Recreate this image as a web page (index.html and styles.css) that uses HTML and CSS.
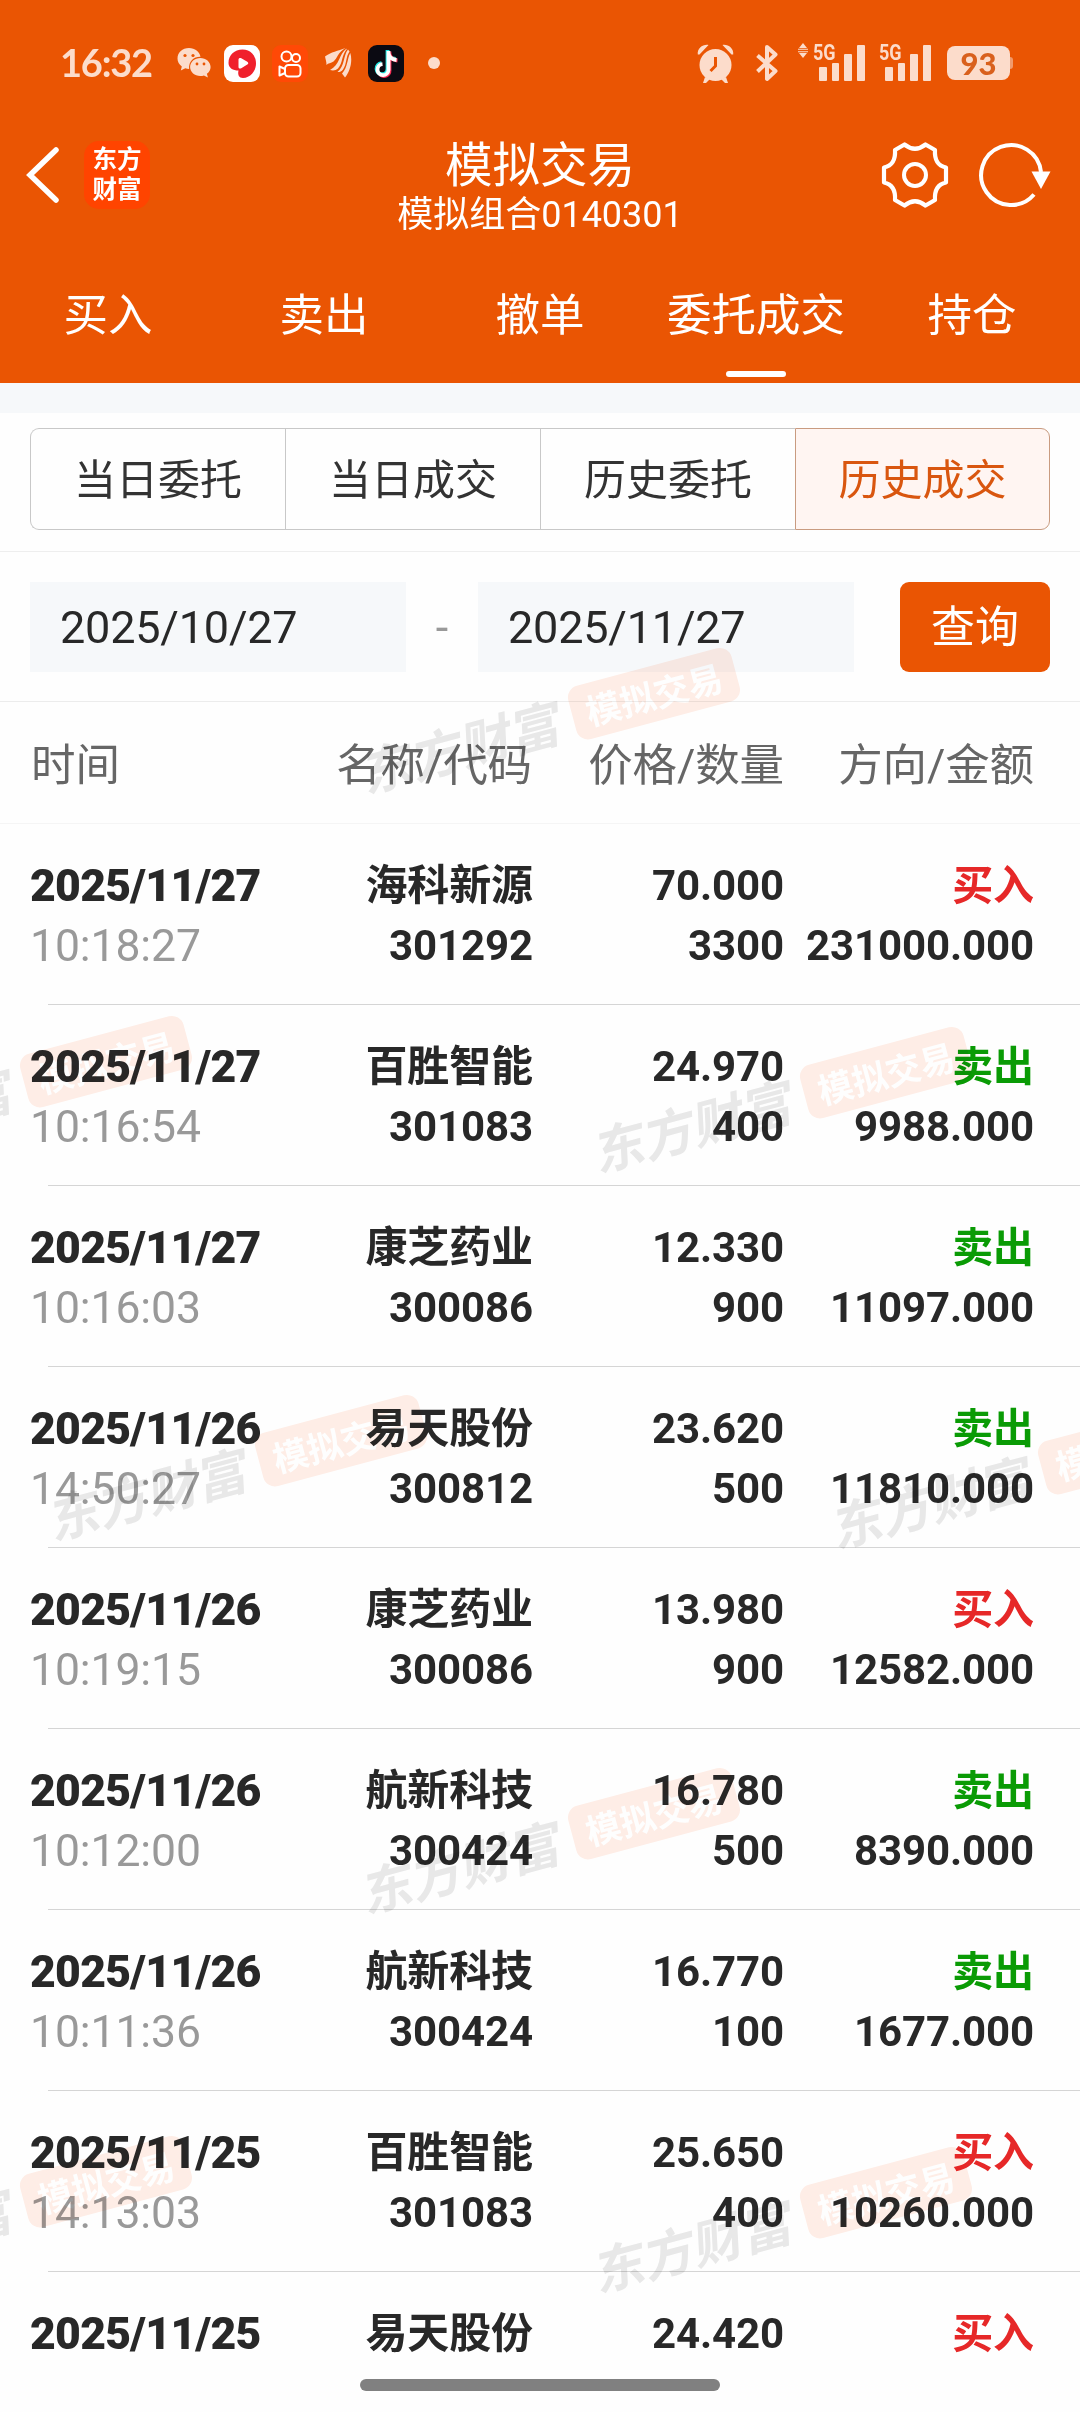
FILE: index.html
```html
<!DOCTYPE html>
<html lang="zh-CN">

<head>
    <meta charset="UTF-8">
    <meta name="viewport" content="width=device-width, initial-scale=1.0">
    <title>模拟交易</title>
    <link rel="stylesheet" href="styles.css">
</head>

<body>

    <div class="page">
        <header class="top">
            <div class="status">
                <span class="clock">16:32</span>
                <svg class="wechat" width="34" height="32" viewBox="0 0 34 32">
                    <path d="M12 1C5.400 1 .5 5.600.5 11.500c0 3.300 1.600 6 4.300 8L3.800 23.500l4.500-2.200c1.300.4 2.500.6 3.800.6C11.500 14 17 9.500 23.500 9.700 22.500 4.500 18 1 12 1z" />
                    <path d="M23.300 11c-5.600 0-10.200 3.900-10.200 9s4.600 9 10.200 9c1.300 0 2.500-.2 3.600-.6l4 2-1-3.600c2.300-1.700 3.700-4 3.700-6.800 0-5.100-4.700-9-10.300-9z" />
                    <g class="hole"><circle cx="8" cy="8.500" r="1.600" /><circle cx="16" cy="8.500" r="1.600" /><circle cx="20" cy="17" r="1.400" /><circle cx="27" cy="17" r="1.400" /></g>
                </svg>
                <svg class="video" width="36" height="37" viewBox="0 0 36 37">
                    <rect width="36" height="37" rx="9" fill="#fff" />
                    <path d="M4.500 18C4.500 10 10.500 4.500 18.500 4.500S32 10.500 32 18.500 26 33 19 33c-4 0-5.500-3-4.500-7.500C9 25.500 4.500 23 4.500 18z" fill="#f0202c" />
                    <path d="M14.500 14.500c0-1.500 1.500-2 2.800-1.300l6 3.600c1.300.8 1.300 2 0 2.800l-6 3.600c-1.300.7-2.800.2-2.800-1.300z" fill="#fff" />
                </svg>
                <svg class="kuaishou" width="36" height="37" viewBox="0 0 36 37">
                    <rect width="36" height="37" rx="9" fill="#ff4906" />
                    <g fill="none" stroke="#fff" stroke-width="2"><circle cx="14.500" cy="11.500" r="5" /><circle cx="24" cy="13" r="4" /><rect x="13" y="20" width="15.500" height="11.500" rx="3.500" /><path d="M13 24l-5.500-2.500v9L13 28" stroke-linejoin="round" /></g>
                </svg>
                <svg class="feather" width="27" height="30" viewBox="0 0 27 30">
                    <path d="M0 8.500C6 4 13 3 20.500 0 13 4 12 11 8.500 13.500 6 15.300 3 15 1.500 17 1.500 13.500.5 11 0 8.500z" />
                    <path d="M21 1C14 6 15 17 5 22c3 1 6 .5 8-1.500C18 15 16.500 7 22 .8z" />
                    <path d="M23 1.500C18 8 20 18 12.500 24c2 .2 4-.5 5.500-2.500C22 16 20.500 9 24.500 3.500z" />
                    <path d="M25.300 5C22 11 23 19 17 25.500l3 4C24.500 24 28 14 25.300 5z" />
                </svg>
                <svg class="tiktok" width="36" height="37" viewBox="0 0 36 37">
                    <rect width="36" height="37" rx="9" fill="#0b0a12" />
                    <g fill="none" stroke-width="3.800"><path d="M19.500 5v19a5.500 5.500 0 1 1-6-5.800M19.500 7c.5 4 3.500 6.500 8 7" stroke="#25e8e3" /><path d="M21.500 6.500v19a5.500 5.500 0 0 1-9 4.300M21.500 8.500c.5 4 3.500 6.500 8 7" stroke="#fb2c55" /><path d="M20.500 6v19a5.500 5.500 0 1 1-6-5.800M20.500 8c.5 4 3.500 6.500 8 7" stroke="#fff" /></g>
                </svg>
                <span class="dot"></span>
                <svg class="alarm" width="37" height="39" viewBox="0 0 37 39">
                    <circle cx="18.500" cy="21" r="16" />
                    <path d="M.8 10.500C0 4.500 6 0 11.500 1L2.500 10.500zM36.200 10.500C37 4.500 31 0 25.500 1l9 9.500zM8 33l-2 6h3l4-4zM29 33l2 6h-3l-4-4z" />
                    <path class="line" d="M18.500 13v9l-5 5" />
                </svg>
                <svg class="bluetooth" width="22" height="38" viewBox="0 0 22 38">
                    <path class="stroke" d="M1.500 11.500L19.500 27 11 35V3l8.500 7.500L1.500 27.500" />
                </svg>
                <svg class="updown" width="10" height="15" viewBox="0 0 10 15">
                    <path d="M1 5L5 0l4 5zM0 5.800h10v1H0zM0 8.300h10v1H0zM1 10l4 5 4-5z" />
                </svg>
                <div class="signal">
                    <span class="net">5G</span>
                    <i class="b1"></i><i class="b2"></i><i class="b3"></i><i class="b4"></i>
                </div>
                <div class="signal second">
                    <span class="net">5G</span>
                    <i class="b1"></i><i class="b2"></i><i class="b3"></i><i class="b4"></i>
                </div>
                <span class="battery">93</span>
            </div>

            <div class="nav">
                <div class="nav-left">
                    <svg width="34" height="58" viewBox="0 0 34 58">
                        <path d="M30 4L4 29l26 25" fill="none" stroke="#fff" stroke-width="5.500" stroke-linecap="round" />
                    </svg>
                    <div class="logo">东方<br>财富</div>
                </div>
                <div class="nav-title">
                    <h1>模拟交易</h1>
                    <p>模拟组合0140301</p>
                </div>
                <div class="nav-right">
                    <svg width="70" height="70" viewBox="-35 -35 70 70">
                        <path d="M-10.500 -30.500Q0 -22 10.500 -30.500L20 -25Q19 -10 31 -7.500V7.500Q19 10 20 25L10.500 30.500Q0 22 -10.500 30.500L-20 25Q-19 10 -31 7.500V-7.500Q-19 -10 -20 -25Z" fill="none" stroke="#fff" stroke-width="4.200" stroke-linejoin="round" />
                        <circle r="11" fill="none" stroke="#fff" stroke-width="4" />
                    </svg>
                    <svg width="76" height="70" viewBox="-35 -35 76 70">
                        <path d="M30 -3A30 30 0 1 0 23 19.500" fill="none" stroke="#fff" stroke-width="4" />
                        <path d="M20.500 -3.500H39.500L30 14z" fill="#fff" />
                    </svg>
                </div>
            </div>

            <nav class="tabs">
                <a>买入</a>
                <a>卖出</a>
                <a>撤单</a>
                <a class="on">委托成交</a>
                <a>持仓</a>
            </nav>
        </header>

        <div class="segment">
            <a>当日委托</a>
            <a>当日成交</a>
            <a>历史委托</a>
            <a class="on">历史成交</a>
        </div>

        <div class="search">
            <div class="date">2025/10/27</div>
            <span class="dash">-</span>
            <div class="date">2025/11/27</div>
            <button type="button">查询</button>
        </div>

        <div class="row head">
            <span>时间</span><span>名称/代码</span><span>价格/数量</span><span>方向/金额</span>
        </div>

        <div class="list">
            <div class="row">
                <div class="time"><b>2025/11/27</b><span>10:18:27</span></div>
                <div>海科新源<br>301292</div>
                <div>70.000<br>3300</div>
                <div><span class="buy">买入</span><br>231000.000</div>
            </div>
            <div class="row">
                <div class="time"><b>2025/11/27</b><span>10:16:54</span></div>
                <div>百胜智能<br>301083</div>
                <div>24.970<br>400</div>
                <div><span class="sell">卖出</span><br>9988.000</div>
            </div>
            <div class="row">
                <div class="time"><b>2025/11/27</b><span>10:16:03</span></div>
                <div>康芝药业<br>300086</div>
                <div>12.330<br>900</div>
                <div><span class="sell">卖出</span><br>11097.000</div>
            </div>
            <div class="row">
                <div class="time"><b>2025/11/26</b><span>14:50:27</span></div>
                <div>易天股份<br>300812</div>
                <div>23.620<br>500</div>
                <div><span class="sell">卖出</span><br>11810.000</div>
            </div>
            <div class="row">
                <div class="time"><b>2025/11/26</b><span>10:19:15</span></div>
                <div>康芝药业<br>300086</div>
                <div>13.980<br>900</div>
                <div><span class="buy">买入</span><br>12582.000</div>
            </div>
            <div class="row">
                <div class="time"><b>2025/11/26</b><span>10:12:00</span></div>
                <div>航新科技<br>300424</div>
                <div>16.780<br>500</div>
                <div><span class="sell">卖出</span><br>8390.000</div>
            </div>
            <div class="row">
                <div class="time"><b>2025/11/26</b><span>10:11:36</span></div>
                <div>航新科技<br>300424</div>
                <div>16.770<br>100</div>
                <div><span class="sell">卖出</span><br>1677.000</div>
            </div>
            <div class="row">
                <div class="time"><b>2025/11/25</b><span>14:13:03</span></div>
                <div>百胜智能<br>301083</div>
                <div>25.650<br>400</div>
                <div><span class="buy">买入</span><br>10260.000</div>
            </div>
            <div class="row">
                <div class="time"><b>2025/11/25</b></div>
                <div>易天股份</div>
                <div>24.420</div>
                <div><span class="buy">买入</span></div>
            </div>
        </div>

        <!-- watermarks lie over the list -->
        <div class="mark m1"><span>东方财富</span><em>模拟交易</em></div>
        <div class="mark m2"><span>东方财富</span><em>模拟交易</em></div>
        <div class="mark m3"><span>东方财富</span><em>模拟交易</em></div>
        <div class="mark m4"><span>东方财富</span><em>模拟交易</em></div>
        <div class="mark m5"><span>东方财富</span><em>模拟交易</em></div>
        <div class="mark m6"><span>东方财富</span><em>模拟交易</em></div>
        <div class="mark m7"><span>东方财富</span><em>模拟交易</em></div>
        <div class="mark m8"><span>东方财富</span><em>模拟交易</em></div>

        <div class="home-bar"></div>
    </div>

</body>

</html>
```
FILE: styles.css
```css
* {
    box-sizing: border-box;
}

body {
    margin: 0;
    font-family: Roboto, "Noto Sans CJK SC", sans-serif;
    background-color: #fefefe;
    color: #282828;
}

.page {
    position: relative;
    width: 1080px;
    height: 2412px;
    overflow: hidden;
}

/* header */
.top {
    height: 383px;
    background-color: #ea5503;
    color: #fff;
}

.status {
    display: flex;
    align-items: center;
    height: 126px;
    padding-left: 60px;
    color: #fcdccb;
}

.status svg {
    flex: none;
    fill: #fcdccb;
}

.clock {
    width: 117px;
    padding-bottom: 3px;
    font-family: Lato, sans-serif;
    font-size: 38px;
    font-weight: 700;
    letter-spacing: -1.2px;
}

.status .hole {
    fill: #ea5503;
}

.status .line {
    fill: none;
    stroke: #ea5503;
    stroke-width: 3;
}

.status .stroke {
    fill: none;
    stroke: #fcdccb;
    stroke-width: 4;
    stroke-linejoin: round;
}

.video {
    margin-left: 13px;
}

.kuaishou {
    margin-left: 12px;
}

.feather {
    margin-left: 17px;
}

.tiktok {
    margin-left: 16px;
}

.dot {
    width: 12px;
    height: 12px;
    margin: 0 257px 0 24px;
    border-radius: 50%;
    background-color: #fcdccb;
}

.bluetooth {
    margin-left: 22px;
}

.updown {
    align-self: flex-start;
    margin: 43px 5px 0 20px;
}

.signal {
    position: relative;
    display: flex;
    align-items: flex-end;
    gap: 5px;
    height: 36px;
    width: 52px;
    padding-left: 6px;
}

.signal.second {
    margin-left: 14px;
}

.net {
    position: absolute;
    left: 0;
    top: -5px;
    font-size: 22.5px;
    line-height: 24px;
    font-weight: 700;
    transform: scaleX(0.8);
    transform-origin: left;
}

.signal i {
    flex: none;
    width: 7.7px;
    border-radius: 1px;
    background-color: #fcdccb;
}

.b1 {
    height: 14px;
}

.b2 {
    height: 18px;
}

.b3 {
    height: 27px;
}

.b4 {
    height: 36px;
}

.battery {
    position: relative;
    width: 63px;
    height: 34px;
    margin-left: 16px;
    border-radius: 8px;
    background-color: #fcdccb;
    color: #d9601c;
    font-family: Lato, sans-serif;
    font-size: 31px;
    font-weight: 900;
    line-height: 34px;
    text-align: center;
}

.battery::after {
    content: "";
    position: absolute;
    left: 63px;
    top: 11px;
    width: 3px;
    height: 12px;
    border-radius: 0 3px 3px 0;
    background-color: #f09a6c;
}

.nav {
    display: grid;
    grid-template-columns: 300px 1fr 300px;
    align-items: center;
    height: 122px;
    margin-top: -12px;
}

.nav-left {
    display: flex;
    align-items: center;
    gap: 24px;
    padding-left: 26px;
}

.logo {
    width: 66px;
    height: 68px;
    padding-top: 2px;
    border-radius: 15px;
    background-color: #ff4400;
    font-family: "Noto Sans CJK SC", sans-serif;
    font-size: 24.5px;
    font-weight: 700;
    line-height: 30px;
    text-align: center;
}

.nav-title {
    padding-top: 24px;
    text-align: center;
}

.nav-title h1 {
    margin: 0;
    font-size: 47.5px;
    font-weight: 400;
    line-height: 56px;
}

.nav-title p {
    margin: 0;
    font-size: 36px;
    line-height: 42px;
}

.nav-right {
    display: flex;
    justify-content: flex-end;
    gap: 26px;
    padding-right: 28px;
}

.tabs {
    display: grid;
    grid-template-columns: repeat(5, 1fr);
    height: 147px;
    font-size: 44.5px;
    text-align: center;
}

.tabs a {
    padding-top: 48px;
    line-height: 64px;
}

.tabs .on::after {
    content: "";
    display: block;
    width: 60px;
    height: 6px;
    margin: 23px auto 0;
    border-radius: 3px;
    background-color: #fff;
}

/* 当日委托 / 历史成交 */
.segment {
    display: flex;
    height: 169px;
    padding: 15px 30px 0;
    border-top: 30px solid #f6f8fa;
    border-bottom: 1px solid #eee;
    color: #333;
    font-size: 42px;
    text-align: center;
}

.segment a {
    flex: 0 0 255px;
    height: 102px;
    border: 1px solid #c8c8c8;
    border-right: none;
    line-height: 104px;
}

.segment a:first-child {
    border-radius: 9px 0 0 9px;
}

.segment .on {
    border: 1px solid #c99b80;
    border-radius: 0 9px 9px 0;
    background-color: #fff5f2;
    color: #d9560f;
}

/* date range */
.search {
    display: flex;
    height: 150px;
    padding: 30px;
    border-bottom: 1px solid #ececec;
    font-size: 45px;
    line-height: 92px;
}

.date {
    width: 376px;
    height: 90px;
    padding-left: 30px;
    background-color: #f6f8fa;
    letter-spacing: -0.2px;
}

.dash {
    width: 72px;
    color: #999;
    text-align: center;
}

.search button {
    width: 150px;
    height: 90px;
    margin-left: 46px;
    padding: 3px 0 0;
    border: none;
    border-radius: 9px;
    background-color: #ea5503;
    color: #fff;
    font: inherit;
    font-size: 44px;
    line-height: 87px;
}

/* deals */
.row {
    display: grid;
    grid-template-columns: 251px 252px 251px 250px;
    position: relative;
    height: 181px;
    padding: 32px 0 0 30px;
    font-size: 42px;
    font-weight: 700;
    line-height: 60px;
    letter-spacing: -0.1px;
    text-align: right;
}

.row::after {
    content: "";
    position: absolute;
    left: 48px;
    right: 0;
    bottom: 0;
    height: 1px;
    background-color: #d5d5d5;
}

.row.head {
    height: 122px;
    padding: 34px 0 0 31px;
    grid-template-columns: 249px 252px 252px 250px;
    border-bottom: 1px solid #f5f5f5;
    color: #666;
    font-size: 44.5px;
    font-weight: 400;
}

.row.head::after {
    display: none;
}

.row > :first-child {
    text-align: left;
}

.time b,
.time span {
    display: block;
    font-size: 44.5px;
}

.time b {
    letter-spacing: -0.7px;
}

.time span {
    color: #999;
    font-weight: 400;
}

.buy {
    color: #e62828;
    font-size: 41px;
}

.sell {
    color: #0a9b05;
    font-size: 41px;
}

/* watermark */
.mark {
    position: absolute;
    display: flex;
    align-items: center;
    gap: 9px;
    width: 384px;
    height: 60px;
    margin: -33px 0 0 -194px;
    transform: rotate(-15deg);
    mix-blend-mode: multiply;
    font-family: "Noto Sans CJK SC", sans-serif;
    white-space: nowrap;
}

.mark span {
    width: 206px;
    color: #e9e9e9;
    font-size: 51px;
    font-weight: 700;
    line-height: 60px;
    transform: skewX(-12deg);
}

.mark em {
    width: 169px;
    height: 55px;
    border-radius: 12px;
    background-color: #ffeee7;
    color: #fff;
    font-size: 35px;
    font-style: normal;
    font-weight: 700;
    line-height: 53px;
    text-align: center;
}

.m1 { left: 552px; top: 724px; }
.m2 { left: 4px; top: 1092px; }
.m3 { left: 784px; top: 1103px; }
.m4 { left: 239px; top: 1471px; }
.m5 { left: 1022px; top: 1479px; }
.m6 { left: 552px; top: 1844px; }
.m7 { left: 4px; top: 2212px; }
.m8 { left: 784px; top: 2223px; }

.home-bar {
    position: absolute;
    left: 360px;
    bottom: 21px;
    width: 360px;
    height: 12px;
    border-radius: 6px;
    background-color: #808080;
}
```
